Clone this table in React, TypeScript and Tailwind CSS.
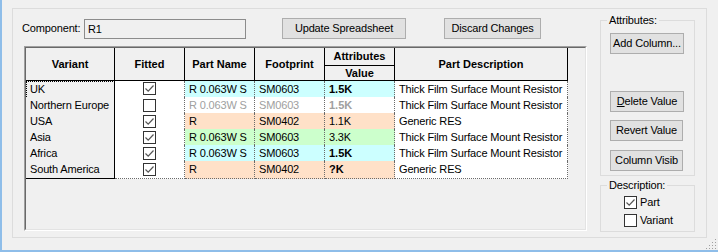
import React from "react";

type Row = {
  variant: string;
  fitted: boolean;
  part: string;
  footprint: string;
  value: string;
  bold: boolean;
  tone: "cyan" | "peach" | "green" | "white";
  desc: string;
  dim?: boolean;
  focus?: boolean;
};

const rows: Row[] = [
  { variant: "UK", fitted: true, part: "R 0.063W S", footprint: "SM0603", value: "1.5K", bold: true, tone: "cyan", desc: "Thick Film Surface Mount Resistor", focus: true },
  { variant: "Northern Europe", fitted: false, part: "R 0.063W S", footprint: "SM0603", value: "1.5K", bold: true, tone: "white", desc: "Thick Film Surface Mount Resistor", dim: true },
  { variant: "USA", fitted: true, part: "R", footprint: "SM0402", value: "1.1K", bold: false, tone: "peach", desc: "Generic RES" },
  { variant: "Asia", fitted: true, part: "R 0.063W S", footprint: "SM0603", value: "3.3K", bold: false, tone: "green", desc: "Thick Film Surface Mount Resistor" },
  { variant: "Africa", fitted: true, part: "R 0.063W S", footprint: "SM0603", value: "1.5K", bold: true, tone: "cyan", desc: "Thick Film Surface Mount Resistor" },
  { variant: "South America", fitted: true, part: "R", footprint: "SM0402", value: "?K", bold: true, tone: "peach", desc: "Generic RES" },
];

const toneBg = {
  cyan: "bg-[#ccffff]",
  peach: "bg-[#ffe1c8]",
  green: "bg-[#ccffcc]",
  white: "bg-white",
};

const cols = "grid grid-cols-[89px_70px_70px_70px_70px_173px]";

function CheckBox({ checked }: { checked: boolean }) {
  return (
    <span className="w-[13px] h-[13px] border border-[#333333] bg-white flex items-center justify-center shrink-0">
      {checked && (
        <svg width="11" height="11" viewBox="0 0 11 11">
          <path d="M1.5 5.5 L4.2 8.2 L9.5 2.5" fill="none" stroke="#555555" strokeWidth="1.2" />
        </svg>
      )}
    </span>
  );
}

function Btn({ children, className = "" }: { children: React.ReactNode; className?: string }) {
  return (
    <button className={`h-[21px] bg-[#e1e1e1] border border-[#adadad] text-black leading-none ${className}`}>
      {children}
    </button>
  );
}

function DataRow({ r }: { r: Row }) {
  const line = r.focus
    ? "border-r border-b-2 [border-style:dotted_dotted_solid_dotted] border-[#6b6b6b] border-b-[#e8000b]"
    : "border-r border-b border-dotted border-[#6b6b6b]";
  const cell = `${line} pl-[4px] flex items-center whitespace-nowrap overflow-hidden`;
  const txt = r.dim ? "text-[#a0a0a0]" : "text-black";
  return (
    <div className={`${cols} h-[16px]`}>
      <div
        className={`bg-[#f0f0f0] border-r border-b border-black pl-[4px] flex items-center whitespace-nowrap ${
          r.focus ? "outline outline-1 outline-dotted outline-black -outline-offset-1" : ""
        }`}
      >
        {r.variant}
      </div>
      <div className={`${line} bg-white flex items-center justify-center`}>
        <CheckBox checked={r.fitted} />
      </div>
      <div className={`${cell} ${toneBg[r.tone]} ${txt}`}>{r.part}</div>
      <div className={`${cell} ${toneBg[r.tone]} ${txt}`}>{r.footprint}</div>
      <div className={`${cell} ${toneBg[r.tone]} ${txt} ${r.bold ? "font-bold tracking-normal" : ""}`}>{r.value}</div>
      <div className={`${cell} bg-white`}>{r.desc}</div>
    </div>
  );
}

export default function App() {
  return (
    <div className="relative w-[718px] h-[252px] bg-[#f0f0f0] border-l-2 border-b-2 border-[#8ebde9] font-['Liberation_Sans',Arial,sans-serif] text-[11px] tracking-[-0.15px] text-black overflow-hidden">
      <div className="ml-[10px] mt-[8px] w-[695px] h-[230px] border border-[#dcdcdc] flex">
        {/* left: component row + spreadsheet */}
        <div className="w-[587px] pl-[9px] pt-[9px] flex flex-col">
          <div className="flex items-start h-[21px]">
            <span className="w-[62px] h-[21px] flex items-center">Component:</span>
            <div className="mt-[1px] w-[162px] h-[20px] border border-[#8c8c8c] pl-[3px] flex items-center">R1</div>
            <Btn className="ml-[36px] w-[124px]">Update Spreadsheet</Btn>
            <Btn className="ml-[38px] w-[97px]">Discard Changes</Btn>
          </div>

          <div className="mt-[7px] ml-[2px] w-[563px] h-[185px] border border-[#a0a0a0] border-r-white border-b-white">
            <div className="h-full border border-[#696969] border-r-[#e3e3e3] border-b-[#e3e3e3]">
              <div className={`${cols} grid-rows-[18px_15px] font-bold tracking-normal`}>
                <div className="row-span-2 border-r border-b border-black flex items-center justify-center">Variant</div>
                <div className="row-span-2 border-r border-b border-black flex items-center justify-center">Fitted</div>
                <div className="row-span-2 border-r border-b border-black flex items-center justify-center">Part Name</div>
                <div className="row-span-2 border-r border-b border-black flex items-center justify-center">Footprint</div>
                <div className="border-r border-b border-black flex items-center justify-center">Attributes</div>
                <div className="row-span-2 border-r border-b border-black flex items-center justify-center">Part Description</div>
                <div className="col-start-5 border-r border-b border-black flex items-center justify-center">Value</div>
              </div>
              {rows.map((r) => (
                <DataRow key={r.variant} r={r} />
              ))}
            </div>
          </div>
        </div>

        {/* right: attribute / description groups */}
        <div className="w-[95px] flex flex-col">
          <fieldset className="mt-[5px] h-[162px] border border-[#dcdcdc] flex flex-col">
            <legend className="ml-[6px] px-[2px] leading-[13px]">Attributes:</legend>
            <Btn className="mt-[6px] ml-[9px] w-[74px]">Add Column...</Btn>
            <Btn className="mt-[37px] ml-[9px] w-[74px]">
              <span className="underline">D</span>elete Value
            </Btn>
            <Btn className="mt-[8px] ml-[9px] w-[73px]">Revert Value</Btn>
            <Btn className="mt-[9px] ml-[9px] w-[73px]">Column Visib</Btn>
          </fieldset>
          <fieldset className="mt-[3px] h-[53px] border border-[#dcdcdc] flex flex-col gap-[5px]">
            <legend className="ml-[6px] px-[2px] leading-[13px]">Description:</legend>
            <label className="mt-[4px] ml-[23px] flex items-center gap-[3px] h-[13px]">
              <CheckBox checked />
              <span>Part</span>
            </label>
            <label className="ml-[23px] flex items-center gap-[3px] h-[13px]">
              <CheckBox checked={false} />
              <span>Variant</span>
            </label>
          </fieldset>
        </div>
      </div>

      {/* size grip */}
      <svg className="absolute right-[1px] bottom-[1px]" width="11" height="11" viewBox="0 0 11 11">
        {[
          [9, 1], [9, 4], [9, 7], [9, 10], [6, 4], [6, 7], [6, 10], [3, 7], [3, 10], [0, 10],
        ].map(([x, y], i) => (
          <rect key={i} x={x} y={y} width="1" height="1" fill="#a0a0a0" />
        ))}
      </svg>
    </div>
  );
}
